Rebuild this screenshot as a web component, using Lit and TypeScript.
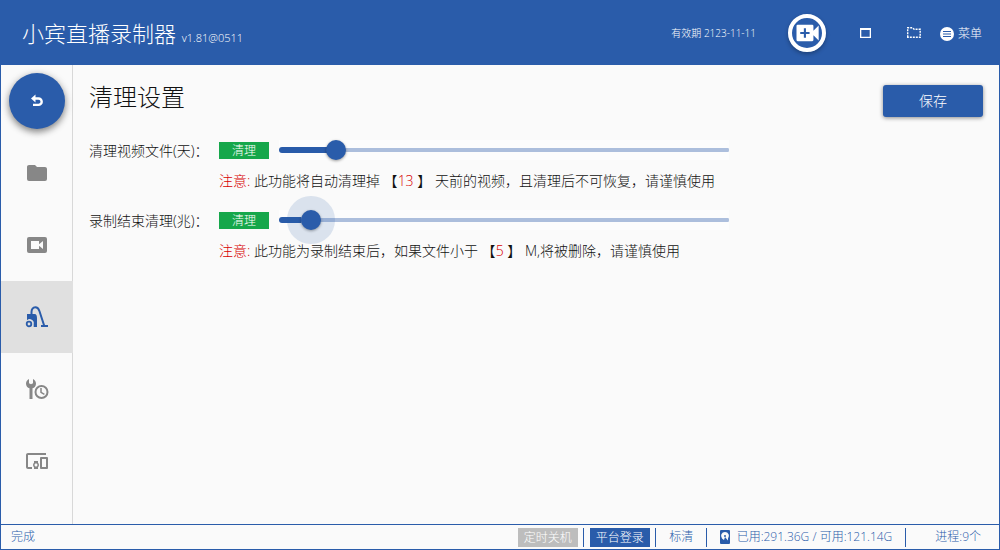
import { LitElement, html, css, svg } from "lit";
import { customElement, state } from "lit/decorators.js";
import { classMap } from "lit/directives/class-map.js";
import { styleMap } from "lit/directives/style-map.js";

const FONT = css`"Open Sans", "Noto Sans CJK SC", sans-serif`;

const icons = {
  folder: svg`<path d="M10,4H4C2.89,4 2,4.89 2,6V18A2,2 0 0,0 4,20H20A2,2 0 0,0 22,18V8C22,6.89 21.1,6 20,6H12L10,4Z"/>`,
  video: svg`<path d="M18,16L14,12.8V16H6V8H14V11.2L18,8M20,4H4A2,2 0 0,0 2,6V18A2,2 0 0,0 4,20H20A2,2 0 0,0 22,18V6A2,2 0 0,0 20,4Z"/>`,
  vacuum: svg`<path d="M6.500 9.500V7C6.500 4 8 2.300 10.300 2.300c2.200 0 3.300 1.300 4.100 3.700L19.300 21" fill="none" stroke="currentColor" stroke-width="2"/><path d="M16 20h7V22h-7zM2 13V9h7.500c2 0 2.500 2 2.500 4.500V22H8.700V19A4 4 0 0 0 2 15.300z"/><circle cx="4" cy="19" r="2.300" fill="none" stroke="currentColor" stroke-width="1.800"/>`,
  tools: svg`<path d="M7.500 11.300V22H4.500V11.300C2.500 10.700 1 8.900 1 6.700 1 4.500 2.500 2.600 4 2V6.300L6 7.300 8 6.300V2c1.500.6 3 2.500 3 4.700 0 2.200-1.500 4-3.500 4.600z"/><circle cx="16.500" cy="15" r="6" fill="none" stroke="currentColor" stroke-width="2"/><path d="M16 11v4.300l3.400 2" fill="none" stroke="currentColor" stroke-width="1.500"/>`,
  devices: svg`<path d="M3 6h18V4H3c-1.100 0-2 .9-2 2v12c0 1.100.9 2 2 2h4v-2H3V6zm10 6H9v1.780c-.61.55-1 1.330-1 2.220s.39 1.670 1 2.220V20h4v-1.780c.61-.55 1-1.340 1-2.220s-.39-1.670-1-2.220V12zm-2 5.500c-.83 0-1.500-.67-1.500-1.500s.67-1.500 1.500-1.500 1.500.67 1.500 1.500-.67 1.500-1.500 1.500zM22 8h-6c-.5 0-1 .5-1 1v10c0 .5.5 1 1 1h6c.5 0 1-.5 1-1V9c0-.5-.5-1-1-1zm-1 10h-4v-8h4v8z"/>`,
};

const navItems = [
  { id: "folder", label: "文件" },
  { id: "video", label: "录制" },
  { id: "vacuum", label: "清理" },
  { id: "tools", label: "定时" },
  { id: "devices", label: "设备" },
] as const;

@customElement("range-slider")
class RangeSlider extends LitElement {
  static properties = {
    value: { type: Number },
    max: { type: Number },
    label: { type: String },
    active: { type: Boolean },
  };
  declare value: number;
  declare max: number;
  declare label: string;
  declare active: boolean;

  static styles = css`
    :host { display: block; flex: 0 1 450px; min-width: 0; }
    .slider {
      appearance: none; display: block; width: 100%; height: 20px; margin: 0;
      background: #fdfdfd; outline: none; cursor: pointer;
    }
    .slider::-webkit-slider-runnable-track {
      height: 6px; border-radius: 3px;
      background:
        linear-gradient(#2a5caa, #2a5caa) left center / var(--fill) 6px no-repeat,
        linear-gradient(#adbfdd, #adbfdd) center / 100% 4px no-repeat;
    }
    .slider::-webkit-slider-thumb {
      appearance: none; width: 20px; height: 20px; margin-top: -7px;
      border-radius: 50%; background: #2a5caa; box-shadow: 0 1px 3px rgba(0, 0, 0, 0.4);
    }
    .active::-webkit-slider-thumb {
      box-shadow: 0 0 0 14px rgba(42, 92, 170, 0.15), 0 1px 3px rgba(0, 0, 0, 0.4);
    }
  `;

  private changed(e: Event) {
    this.value = Number((e.target as HTMLInputElement).value);
    this.dispatchEvent(new CustomEvent("slide", { detail: this.value }));
  }

  render() {
    const fill = `${(this.value / this.max) * 100}%`;
    return html`<input type="range" min="0" max=${this.max} .value=${String(this.value)}
      aria-label=${this.label} class=${classMap({ slider: true, active: this.active })}
      style=${styleMap({ "--fill": fill })} @input=${this.changed} />`;
  }
}

@customElement("app-root")
class AppRoot extends LitElement {
  @state() private days = 13;
  @state() private size = 5;
  @state() private section = "vacuum";

  static styles = css`
    :host {
      display: flex; flex-direction: column; min-height: 100vh; box-sizing: border-box;
      border: 1px solid #2a5caa; border-top: 0; background: #fafafa; color: #111;
      font: 300 14px/20px ${FONT};
    }
    button { border: 0; padding: 0; margin: 0; background: none; color: inherit; font: inherit; cursor: pointer; }
    svg { display: block; fill: currentColor; }
    .header {
      display: flex; align-items: center; justify-content: space-between; height: 65px;
      padding: 0 17px 0 21px; background: #2a5caa; color: #fff;
    }
    .title { margin: 0; padding-top: 6px; font-size: 22px; line-height: 32px; font-weight: 300; }
    .version { font-size: 11px; }
    .tools { display: flex; align-items: center; }
    .expiry { font-size: 10px; margin-right: 32px; }
    .record {
      display: grid; place-items: center; width: 38px; height: 38px; box-sizing: border-box;
      border: 4px solid #fff; border-radius: 50%; margin-right: 30px;
      box-shadow: 0 2px 4px rgba(0, 0, 0, 0.3);
    }
    .window { display: grid; place-items: center; width: 20px; height: 20px; margin-right: 28px; }
    .window.last { margin-right: 16px; }
    .menu { display: flex; align-items: center; gap: 4px; padding-top: 2px; font-size: 12px; }
    .body { display: flex; flex: 1; }
    .sidebar {
      width: 72px; background: linear-gradient(#d8d8d8, #d8d8d8) right / 1px 100% no-repeat;
      display: flex; flex-direction: column;
    }
    .back {
      align-self: center; width: 56px; height: 56px; margin: 8px 0; border-radius: 50%;
      display: grid; place-items: center; background: #2a5caa; color: #fff;
      box-shadow: 0 3px 6px rgba(0, 0, 0, 0.35), 0 2px 10px rgba(0, 0, 0, 0.2);
    }
    .nav { display: flex; flex-direction: column; }
    .item { display: grid; place-items: center; height: 72px; color: #878787; }
    .item.selected { background: #e0e0e0; color: #2a5caa; }
    .content { flex: 1; min-width: 0; padding: 14px 16px; }
    .top { display: flex; justify-content: space-between; align-items: flex-start; margin-bottom: 23px; }
    .heading { margin: 0; font-size: 24px; line-height: 36px; font-weight: 300; }
    .save {
      width: 100px; height: 32px; margin-top: 6px; border-radius: 3px; background: #2a5caa; color: #fff;
      box-shadow: 0 1px 4px rgba(0, 0, 0, 0.45);
    }
    .row { display: grid; grid-template-columns: 130px 1fr; margin-bottom: 19px; }
    .label { line-height: 22px; }
    .control { display: flex; align-items: center; gap: 10px; height: 20px; }
    .clean { width: 50px; height: 17px; background: #16a74b; color: #fff; font-size: 12px; line-height: 17px; }
    .note { margin: 11px 0 0; }
    .red { color: #d80000; }
    .footer {
      display: flex; align-items: center; justify-content: space-between; height: 24px;
      border-top: 1px solid #2a5caa; padding: 0 18px 0 10px; color: #2a5caa; font-size: 12px;
    }
    .status { display: flex; align-items: center; }
    .chip { width: 60px; height: 19px; line-height: 19px; background: #2a5caa; color: #fff; }
    .chip.off { background: #bdbdbd; }
    .bar { width: 1px; height: 19px; margin: 0 6px 0 5px; background: #2a5caa; }
    .quality { width: 39px; text-align: center; }
    .disk { display: flex; align-items: center; gap: 6px; margin: 0 8px 0 6px; }
    .process { margin-left: 23px; }
  `;

  private row(label: string, value: number, max: number, active: boolean, set: (v: number) => void, note: unknown) {
    return html`<div class="row">
      <span class="label">${label}</span>
      <div>
        <div class="control">
          <button class="clean">清理</button>
          <range-slider .label=${label} .max=${max} .value=${value} .active=${active}
            @slide=${(e: CustomEvent<number>) => set(e.detail)}></range-slider>
        </div>
        <p class="note"><span class="red">注意:</span> ${note}</p>
      </div>
    </div>`;
  }

  render() {
    return html`
      <header class="header">
        <h1 class="title">小宾直播录制器 <span class="version">v1.81@0511</span></h1>
        <div class="tools">
          <span class="expiry">有效期 2123-11-11</span>
          <button class="record" aria-label="添加录制">
            <svg width="28" height="28" viewBox="0 0 24 24"><path fill-rule="evenodd" d="M4 5h12.500a1 1 0 0 1 1 1v4l4.500-4.500v13l-4.500-4.500v4a1 1 0 0 1-1 1H4a1 1 0 0 1-1-1V6a1 1 0 0 1 1-1zM9.300 8v3.100H6.200v1.800h3.100V16h1.800v-3.100h3.100v-1.800h-3.100V8z"/></svg>
          </button>
          <button class="window" aria-label="最大化">
            <svg width="12" height="12" viewBox="0 0 12 12"><path fill-rule="evenodd" d="M0 1h11v10H0zM1.300 3v6.700h8.400V3z"/></svg>
          </button>
          <button class="window last" aria-label="打开目录">
            <svg width="14" height="12" viewBox="0 0 14 12"><path d="M.7 10.300V.8h5l1.500 1.500h6v8z" fill="none" stroke="currentColor" stroke-width="1.400" stroke-dasharray="2 1"/></svg>
          </button>
          <button class="menu">
            <svg width="14" height="14" viewBox="0 0 14 14"><circle cx="7" cy="7" r="7"/><path d="M3 4.500h8M3 7h8M3 9.500h8" stroke="#2a5caa" stroke-width="1.200"/></svg>
            菜单
          </button>
        </div>
      </header>
      <div class="body">
        <aside class="sidebar">
          <button class="back" aria-label="返回">
            <svg width="14" height="14" viewBox="0 0 14 14"><path d="M4 4.500h4.500a3.200 3.200 0 0 1 0 6.400H3" fill="none" stroke="currentColor" stroke-width="2.400"/><path d="M5.500 .5v8L1 4.500z"/></svg>
          </button>
          <nav class="nav">
            ${navItems.map((n) => html`<button aria-label=${n.label}
              class=${classMap({ item: true, selected: n.id === this.section })}
              @click=${() => (this.section = n.id)}>
              <svg width="24" height="24" viewBox="0 0 24 24">${icons[n.id]}</svg>
            </button>`)}
          </nav>
        </aside>
        <main class="content">
          <div class="top">
            <h2 class="heading">清理设置</h2>
            <button class="save">保存</button>
          </div>
          ${this.row("清理视频文件(天)：", this.days, 120, false, (v) => (this.days = v),
            html`此功能将自动清理掉 【<span class="red">${this.days}</span> 】 天前的视频，且清理后不可恢复，请谨慎使用`)}
          ${this.row("录制结束清理(兆)：", this.size, 100, true, (v) => (this.size = v),
            html`此功能为录制结束后，如果文件小于 【<span class="red">${this.size}</span> 】 M,将被删除，请谨慎使用`)}
        </main>
      </div>
      <footer class="footer">
        <span>完成</span>
        <div class="status">
          <button class="chip off">定时关机</button><i class="bar"></i>
          <button class="chip">平台登录</button><i class="bar"></i>
          <span class="quality">标清</span><i class="bar"></i>
          <span class="disk">
            <svg width="12" height="14" viewBox="0 0 12 14"><path fill-rule="evenodd" d="M2 0h8a1 1 0 0 1 1 1v12a1 1 0 0 1-1 1H2a1 1 0 0 1-1-1V1a1 1 0 0 1 1-1zM6 2a4 4 0 0 0-3 6.600L5 10l1-3 3 3.500V8.600A4 4 0 0 0 6 2z"/><circle cx="6" cy="6" r="1"/></svg>
            已用:291.36G / 可用:121.14G
          </span><i class="bar"></i>
          <span class="process">进程:9个</span>
        </div>
      </footer>
    `;
  }
}
